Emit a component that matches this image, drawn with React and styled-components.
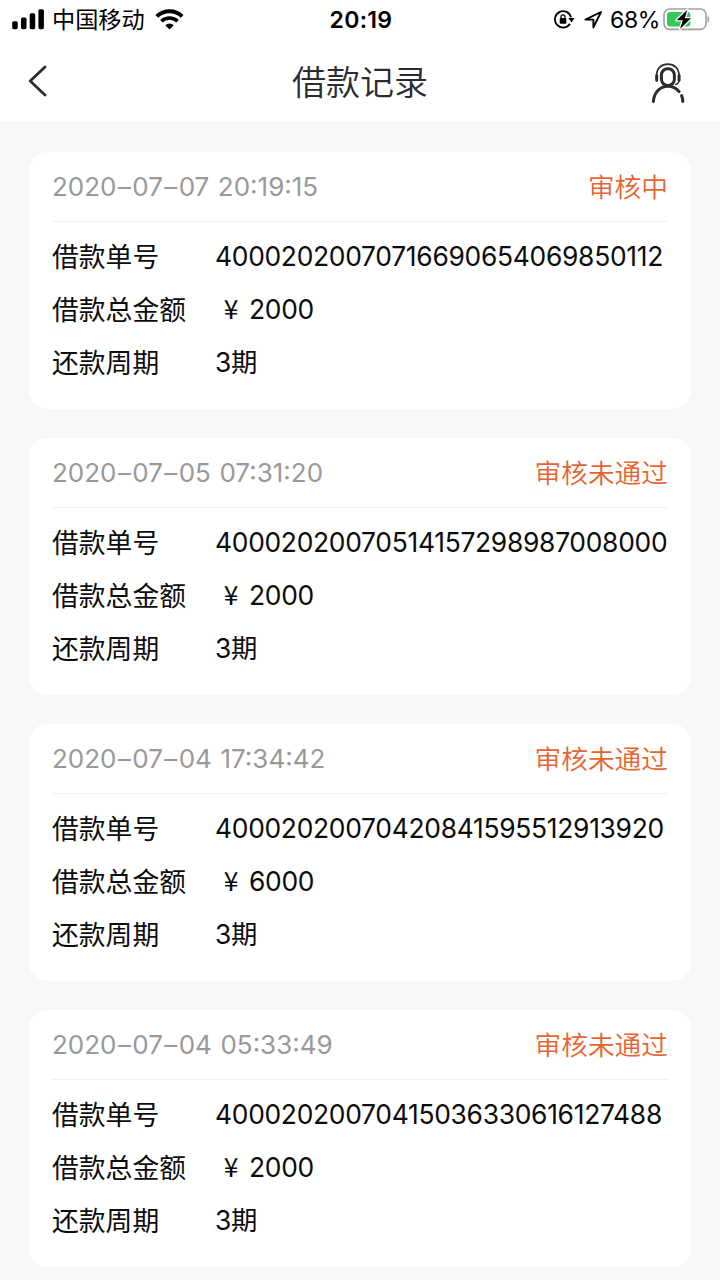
import React from "react";
import styled, { createGlobalStyle } from "styled-components";

const GlobalStyle = createGlobalStyle`
  * {
    box-sizing: border-box;
  }
  body {
    margin: 0;
    background: #f7f7f7;
    font-family: Inter, "Noto Sans CJK SC", sans-serif;
    -webkit-font-smoothing: antialiased;
  }
`;

const Page = styled.div`
  width: 720px;
  height: 1280px;
  overflow: hidden;
  background: #f7f7f7;
`;

const Top = styled.div`
  height: 122px;
  background: #fff;
  border-bottom: 1px solid #f8f8fa;
`;

const StatusBar = styled.div`
  display: grid;
  grid-template-columns: 1fr auto 1fr;
  align-items: center;
  height: 40px;
  padding: 0 10px 0 12px;
  color: #000;
`;

const StatusGroup = styled.div`
  display: flex;
  align-items: center;
  justify-content: ${(props) => (props.$end ? "flex-end" : "flex-start")};
`;

const Carrier = styled.span`
  margin: 0 10px 0 8px;
  padding-top: 1px;
  font-size: 23.2px;
  line-height: 39px;
`;

const Clock = styled.span`
  font-size: 23px;
  font-weight: 600;
  letter-spacing: 0.3px;
`;

const Percent = styled.span`
  margin: 0 3px 0 7px;
  font-size: 23px;
  letter-spacing: -0.4px;
`;

const NavBar = styled.div`
  display: grid;
  grid-template-columns: 60px 1fr 60px;
  align-items: center;
  height: 81px;
  padding: 0 22px 0 8px;
`;

const NavButton = styled.button`
  display: flex;
  width: 60px;
  height: 60px;
  padding: ${(props) => props.$top || 0}px 0 0;
  border: none;
  background: none;
  align-items: center;
  justify-content: center;
`;

const Title = styled.h1`
  margin: 0;
  padding: 4px 0 0 14px;
  font-size: 34px;
  font-weight: 350;
  line-height: 60px;
  text-align: center;
  color: #2b2b30;
`;

const RecordList = styled.div`
  display: flex;
  flex-direction: column;
  gap: 29px;
  padding: 30px 29px;
`;

const Card = styled.div`
  height: 257px;
  padding: 0 23px;
  border-radius: 19px;
  background: #fff;
`;

const CardHeader = styled.div`
  display: flex;
  align-items: center;
  justify-content: space-between;
  height: 70px;
  border-bottom: 1px solid #f0f0f0;
`;

const Time = styled.span`
  font-size: 26px;
  word-spacing: 1.2px;
  color: #999;
`;

const Dash = styled.span`
  margin: 0 1.4px;
`;

const Status = styled.span`
  font-size: 26.7px;
  font-weight: 350;
  line-height: 50px;
  color: #e8642f;
`;

const Rows = styled.div`
  padding-top: 8px;
`;

const Row = styled.div`
  display: flex;
  height: 53px;
  font-size: 26.8px;
  line-height: 53px;
  color: #0c0c0c;
  white-space: nowrap;
`;

const Label = styled.span`
  width: 163px;
  padding-top: 1px;
  flex-shrink: 0;
`;

const Value = styled.span`
  font-size: 26.4px;
  letter-spacing: -0.28px;
`;

const Yen = styled.span`
  display: inline-block;
  width: 27px;
  margin-right: 7px;
  padding-left: 5px;
  text-align: center;
  font-family: "Noto Sans CJK SC", sans-serif;
  line-height: 1;
`;

const records = [
  { date: "2020-07-07", time: "20:19:15", status: "审核中", no: "40002020070716690654069850112", amount: 2000, period: 3 },
  { date: "2020-07-05", time: "07:31:20", status: "审核未通过", no: "40002020070514157298987008000", amount: 2000, period: 3 },
  { date: "2020-07-04", time: "17:34:42", status: "审核未通过", no: "40002020070420841595512913920", amount: 6000, period: 3 },
  { date: "2020-07-04", time: "05:33:49", status: "审核未通过", no: "40002020070415036330616127488", amount: 2000, period: 3 },
];

const SignalIcon = () => (
  <svg width="32" height="22" viewBox="0 0 32 22">
    <rect x="0.2" y="12.2" width="5.5" height="8" rx="1.6" />
    <rect x="9" y="8.6" width="5.5" height="11.6" rx="1.6" />
    <rect x="17.7" y="4.2" width="5.5" height="16" rx="1.6" />
    <rect x="26.4" y="0.2" width="5.5" height="20" rx="1.6" />
  </svg>
);

const WifiIcon = () => (
  <svg width="29" height="22" viewBox="0 0 29 22">
    <path d="M1.8 7.4a18.2 18.2 0 0 1 25.4 0" fill="none" stroke="#000" strokeWidth="4" />
    <path d="M6.4 12.3a11.7 11.7 0 0 1 16.2 0" fill="none" stroke="#000" strokeWidth="3.6" />
    <path d="M14.5 20.5l-4.2-4.3a6 6 0 0 1 8.4 0z" />
  </svg>
);

const RotationLockIcon = () => (
  <svg width="31" height="20" viewBox="0 0 31 20">
    <path d="M17 13.8A8.2 8.2 0 1 1 18.1 7.4" fill="none" stroke="#000" strokeWidth="1.8" />
    <path d="M15.3 8h6.2l-3 4.4z" />
    <rect x="6.7" y="7.9" width="6.6" height="5.8" rx="0.8" />
    <path d="M8 8.4V6.8a2 2 0 0 1 4 0v1.6" fill="none" stroke="#000" strokeWidth="1.3" />
  </svg>
);

const LocationIcon = () => (
  <svg width="19" height="18" viewBox="0 0 19 18">
    <path d="M1.4 8.6L17 1 9.4 16.4V8.6z" fill="none" stroke="#000" strokeWidth="1.9" strokeLinejoin="round" />
  </svg>
);

const BatteryIcon = () => (
  <svg width="47" height="24" viewBox="0 0 47 24">
    <rect x="1" y="1" width="42" height="20.4" rx="5.6" fill="#fff" stroke="#a0a0a0" strokeWidth="1.6" />
    <path d="M44.6 7.4c2.2.8 2.2 6.8 0 7.6z" fill="#a0a0a0" />
    <rect x="4" y="4" width="23.4" height="14.4" rx="3" fill="#34c759" />
    <path d="M24.4 1.8L13.6 12.3h6.2l-2.8 8.6L28 10.3h-6.2z" stroke="#fff" strokeWidth="2.6" paintOrder="stroke" strokeLinejoin="round" />
  </svg>
);

const BackIcon = () => (
  <svg width="20" height="32" viewBox="0 0 20 32">
    <path d="M17 2L2.2 16 17 30" fill="none" stroke="#2b2b30" strokeWidth="2.8" strokeLinecap="round" strokeLinejoin="round" />
  </svg>
);

const ServiceIcon = () => (
  <svg width="36" height="42" viewBox="0 0 36 42" fill="none" stroke="#2b2b30" strokeLinecap="round">
    <rect x="11.4" y="6.8" width="13" height="16.6" rx="6.2" strokeWidth="3" />
    <path d="M6.6 13.4C6.6 6.2 11.4 2.2 17.8 2.2S29 6.2 29 13.4" strokeWidth="1.7" />
    <path d="M6.7 13.6v4.6M29.1 13.6v4.6" strokeWidth="3" />
    <path d="M29 19.4c-.6 1.6-1.8 2.6-3.4 3" strokeWidth="1.5" />
    <path d="M3.4 39.4C4 30.4 10 24.2 17.8 24.2c4.6 0 8.6 2 11.3 5.4" strokeWidth="3" />
    <path d="M31.6 33.6c.7 1.7 1.1 3.7 1.2 5.8" strokeWidth="3" />
  </svg>
);

const RecordTime = ({ date, time }) => {
  const [year, month, day] = date.split("-");
  return (
    <Time>
      {year}
      <Dash>–</Dash>
      {month}
      <Dash>–</Dash>
      {day} {time}
    </Time>
  );
};

function App() {
  return (
    <Page>
      <GlobalStyle />
      <Top>
        <StatusBar>
          <StatusGroup>
            <SignalIcon />
            <Carrier>中国移动</Carrier>
            <WifiIcon />
          </StatusGroup>
          <Clock>20:19</Clock>
          <StatusGroup $end>
            <RotationLockIcon />
            <LocationIcon />
            <Percent>68%</Percent>
            <BatteryIcon />
          </StatusGroup>
        </StatusBar>
        <NavBar>
          <NavButton aria-label="back">
            <BackIcon />
          </NavButton>
          <Title>借款记录</Title>
          <NavButton aria-label="service" $top={4}>
            <ServiceIcon />
          </NavButton>
        </NavBar>
      </Top>
      <RecordList>
        {records.map((record) => (
          <Card key={record.no}>
            <CardHeader>
              <RecordTime date={record.date} time={record.time} />
              <Status>{record.status}</Status>
            </CardHeader>
            <Rows>
              <Row>
                <Label>借款单号</Label>
                <Value>{record.no}</Value>
              </Row>
              <Row>
                <Label>借款总金额</Label>
                <Value>
                  <Yen>¥</Yen>
                  {record.amount}
                </Value>
              </Row>
              <Row>
                <Label>还款周期</Label>
                <Value>{record.period}期</Value>
              </Row>
            </Rows>
          </Card>
        ))}
      </RecordList>
    </Page>
  );
}

export default App;
